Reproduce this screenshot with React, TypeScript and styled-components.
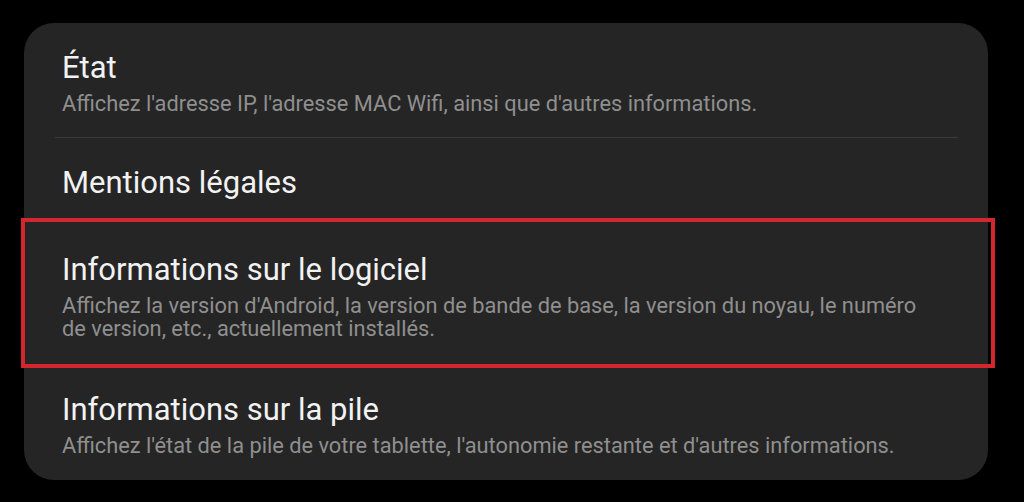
import React from "react";
import styled, { createGlobalStyle } from "styled-components";

const Global = createGlobalStyle`
  html, body { margin: 0; padding: 0; background: #000; }
  body { font-family: Roboto, "Noto Sans", sans-serif; }
`;

const Page = styled.div`
  width: 1024px;
  height: 502px;
  background: #000;
  padding: 23px 36px 0 24px;
  box-sizing: border-box;
`;

const Card = styled.div`
  background: #252525;
  border-radius: 30px;
  height: 457px;
  display: flex;
  flex-direction: column;
`;

const Row = styled.div<{ $pt: number; $pb: number; $divider?: boolean }>`
  position: relative;
  padding: ${(p) => p.$pt}px 50px ${(p) => p.$pb}px 38px;
  display: flex;
  flex-direction: column;
  gap: 6px;
  ${(p) =>
    p.$divider &&
    `&::after {
      content: "";
      position: absolute;
      left: 31px;
      right: 30px;
      bottom: 0;
      height: 1px;
      background: #3a3a3a;
    }`}
`;

const Title = styled.div`
  color: #f2f2f2;
  font-size: 31px;
  line-height: 36px;
`;

const Sub = styled.div`
  color: #8f8f8f;
  font-size: 21.8px;
  line-height: 23.5px;
`;

const Highlight = styled.span`
  position: absolute;
  left: -3px;
  right: -7px;
  top: -4px;
  bottom: -2px;
  border: 4px solid #d3262e;
  pointer-events: none;
`;

export default function App() {
  return (
    <>
      <Global />
      <Page>
        <Card>
          <Row $pt={27} $pb={22} $divider>
            <Title>État</Title>
            <Sub>Affichez l'adresse IP, l'adresse MAC Wifi, ainsi que d'autres informations.</Sub>
          </Row>
          <Row $pt={27} $pb={21}>
            <Title>Mentions légales</Title>
          </Row>
          <Row $pt={30} $pb={25}>
            <Title>Informations sur le logiciel</Title>
            <Sub>
              Affichez la version d'Android, la version de bande de base, la version du noyau, le numéro de version, etc., actuellement installés.
            </Sub>
            <Highlight />
          </Row>
          <Row $pt={26} $pb={21}>
            <Title>Informations sur la pile</Title>
            <Sub>Affichez l'état de la pile de votre tablette, l'autonomie restante et d'autres informations.</Sub>
          </Row>
        </Card>
      </Page>
    </>
  );
}
